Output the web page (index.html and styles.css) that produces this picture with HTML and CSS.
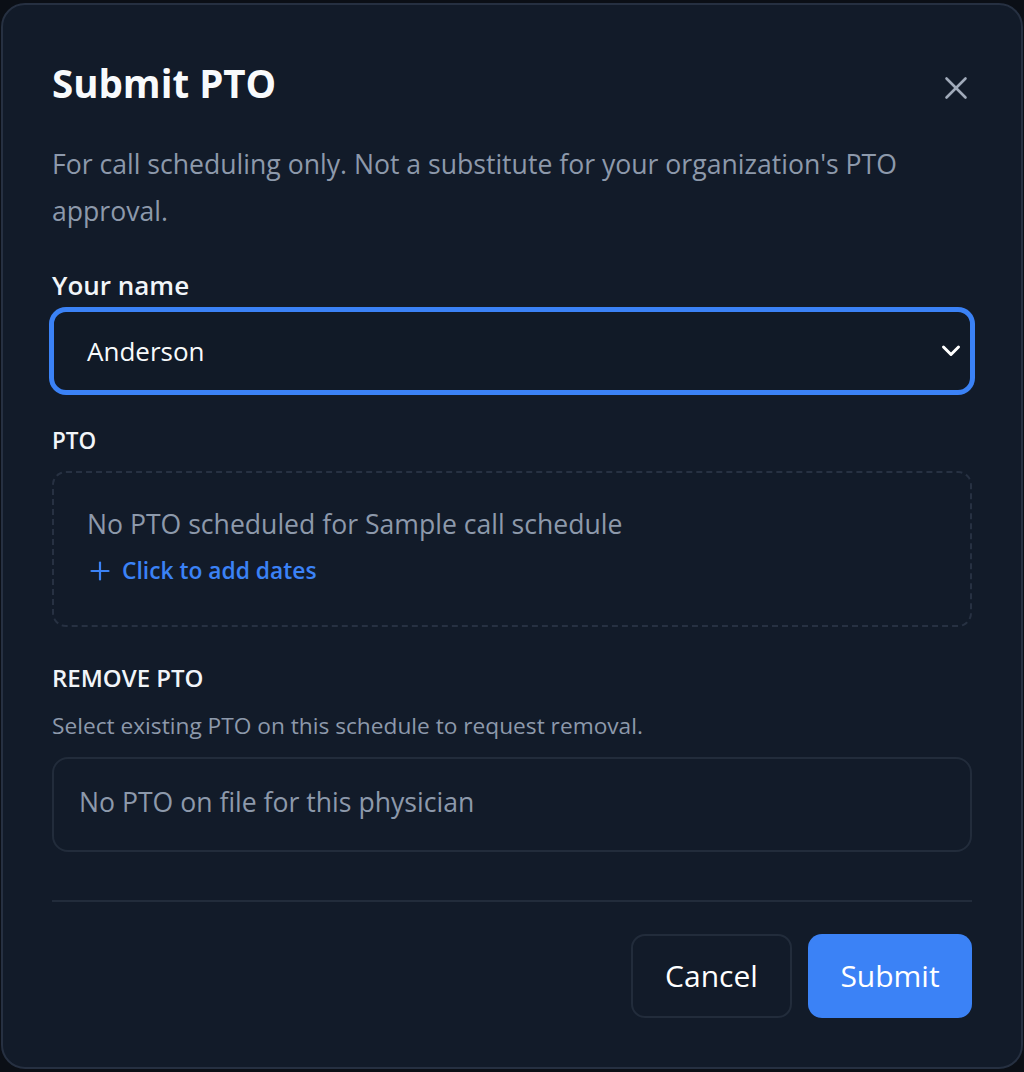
FILE: index.html
```html
<!DOCTYPE html>
<html lang="en">
<head>
<meta charset="utf-8">
<title>Submit PTO</title>
<link rel="stylesheet" href="styles.css">
</head>
<body>
<div class="modal" role="dialog" aria-labelledby="modal-title">
  <div class="header">
    <h2 id="modal-title" class="title">Submit PTO</h2>
    <button class="close" aria-label="Close">
      <svg width="32" height="32" viewBox="0 0 32 32" fill="none" stroke="currentColor" stroke-width="2.6" stroke-linecap="round"><line x1="6.5" y1="6.5" x2="25.5" y2="25.5"/><line x1="25.5" y1="6.5" x2="6.5" y2="25.5"/></svg>
    </button>
  </div>
  <p class="desc">For call scheduling only. Not a substitute for your organization's PTO approval.</p>

  <div class="label label-name">Your name</div>
  <div class="select" role="combobox" tabindex="0">
    <span class="select-value">Anderson</span>
    <svg class="chevron" width="22" height="22" viewBox="0 0 22 22" fill="none" stroke="currentColor" stroke-width="3" stroke-linecap="round" stroke-linejoin="round"><polyline points="3.5,7 11,14.5 18.5,7"/></svg>
  </div>

  <div class="label label-small label-pto">PTO</div>
  <div class="dashed-box">
    <div class="empty-text">No PTO scheduled for Sample call schedule</div>
    <button class="add-link">
      <svg width="20" height="20" viewBox="0 0 20 20" fill="none" stroke="currentColor" stroke-width="2.2" stroke-linecap="round"><line x1="10" y1="1.5" x2="10" y2="18.5"/><line x1="1.5" y1="10" x2="18.5" y2="10"/></svg>
      <span>Click to add dates</span>
    </button>
  </div>

  <div class="label label-small label-remove">REMOVE PTO</div>
  <div class="hint">Select existing PTO on this schedule to request removal.</div>
  <div class="file-box">No PTO on file for this physician</div>

  <div class="divider"></div>
  <div class="actions">
    <button class="btn btn-cancel">Cancel</button>
    <button class="btn btn-submit">Submit</button>
  </div>
</div>
</body>
</html>
```
FILE: styles.css
```css
* { box-sizing: border-box; }

html, body {
  margin: 0;
  padding: 0;
}

body {
  background: #0b0f16;
  font-family: "Open Sans", "Noto Sans", sans-serif;
  width: 1024px;
  height: 1072px;
  padding-top: 3px;
  overflow: hidden;
}

.modal {
  margin-left: 1px;
  width: 1022px;
  height: 1066px;
  background: #121b29;
  border: 2px solid #263041;
  border-radius: 24px;
  padding: 54px 49px 0 49px;
  display: flex;
  flex-direction: column;
}

.header {
  display: flex;
  justify-content: space-between;
  align-items: flex-start;
  height: 48px;
}

.title {
  margin: 0;
  font-size: 38.5px;
  line-height: 48px;
  font-weight: 700;
  color: #f8fafc;
}

.close {
  margin-top: 13px;
  width: 32px;
  height: 32px;
  padding: 0;
  border: 0;
  background: transparent;
  color: #a0aab9;
  display: flex;
  align-items: center;
  justify-content: center;
}

.desc {
  margin: 34px 0 0 0;
  font-size: 26.6px;
  line-height: 47px;
  color: #8d99ab;
}

.label {
  color: #f1f5f9;
  font-weight: 600;
}

.label-name {
  margin-top: 34px;
  font-size: 26px;
  line-height: 32px;
}

.select {
  margin-top: 9px;
  height: 82px;
  border: 2px solid #3b82f6;
  box-shadow: 0 0 0 3px #3b82f6;
  border-radius: 14px;
  background: #111a27;
  display: flex;
  align-items: center;
  justify-content: space-between;
  padding: 0 8px 0 33px;
  color: #ffffff;
}

.select-value {
  font-size: 26px;
  line-height: 32px;
  color: #f8fafc;
}

.chevron {
  color: #ffffff;
}

.label-small {
  font-size: 22.5px;
  line-height: 28px;
}

.label-pto {
  margin-top: 35px;
}

.label-remove {
  margin-top: 37px;
  font-size: 24px;
}

.dashed-box {
  margin-top: 16px;
  height: 156px;
  border: 2px dashed #273142;
  border-radius: 14px;
  padding: 33px 33px 0 33px;
  display: flex;
  flex-direction: column;
  align-items: flex-start;
}

.empty-text {
  font-size: 26.6px;
  line-height: 36px;
  color: #8d99ab;
}

.add-link {
  margin-top: 15px;
  margin-left: 3px;
  padding: 0;
  border: 0;
  background: transparent;
  color: #3b82f6;
  font-family: inherit;
  font-size: 22.8px;
  line-height: 28px;
  font-weight: 600;
  display: flex;
  align-items: center;
  gap: 12px;
}

.hint {
  margin-top: 19px;
  font-size: 22.7px;
  line-height: 30px;
  color: #8d99ab;
}

.file-box {
  margin-top: 16px;
  height: 95px;
  border: 2px solid #222c3b;
  border-radius: 16px;
  padding: 25px 25px 0 25px;
  font-size: 26.6px;
  line-height: 36px;
  color: #8d99ab;
}

.divider {
  margin-top: 48px;
  height: 2px;
  background: #222c3b;
}

.actions {
  margin-top: 32px;
  display: flex;
  justify-content: flex-end;
  gap: 16px;
}

.btn {
  height: 84px;
  padding: 0;
  border-radius: 14px;
  font-family: inherit;
  font-size: 30px;
  line-height: 40px;
  color: #ffffff;
  text-align: center;
}

.btn-cancel {
  width: 161px;
  background: transparent;
  border: 2px solid #222c3b;
}

.btn-submit {
  width: 164px;
  background: #3b82f6;
  border: 0;
}
```
